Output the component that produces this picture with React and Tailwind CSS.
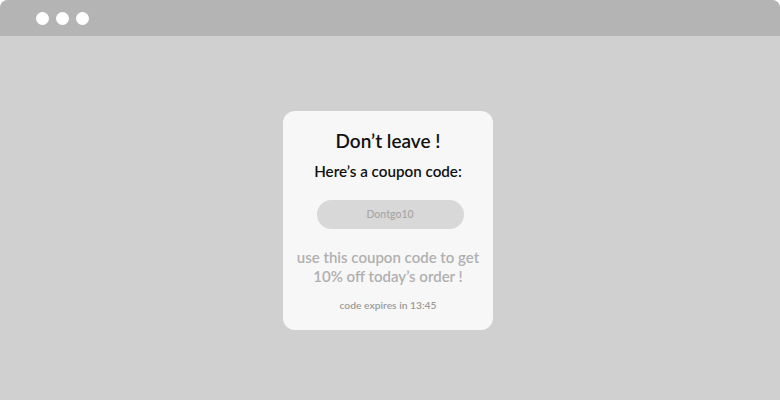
export default function App() {
  return (
    <div className="h-[400px] w-[780px] overflow-hidden rounded-t-lg bg-[#d0d0d0] font-['Lato',sans-serif]">
      <div className="flex h-9 items-center gap-[7px] bg-[#b4b4b4] pl-9">
        <span className="h-[13px] w-[13px] rounded-full bg-white" />
        <span className="h-[13px] w-[13px] rounded-full bg-white" />
        <span className="h-[13px] w-[13px] rounded-full bg-white" />
      </div>
      <div className="flex justify-center pr-1 pt-[75px]">
        <div className="flex h-[219px] w-[210px] flex-col items-center rounded-xl bg-[#f7f7f7] pt-[18px]">
          <h1 className="text-[19px] font-semibold leading-6 text-[#111]">Don’t leave !</h1>
          <p className="mt-[8px] text-[15.2px] font-semibold leading-5 text-[#111]">Here’s a coupon code:</p>
          <div className="ml-1 mt-[19px] flex h-[29px] w-[147px] items-center justify-center rounded-full bg-[#d8d8d8] text-[10.5px] font-semibold text-[#a8a8a8]">
            Dontgo10
          </div>
          <p className="mt-[19px] text-center text-[15px] font-semibold leading-[19px] text-[#b0b0b0]">
            use this coupon code to get
            <br />
            10% off today’s order !
          </p>
          <p className="mt-[12px] text-[10.3px] font-semibold text-[#9a9a9a]">code expires in 13:45</p>
        </div>
      </div>
    </div>
  );
}
